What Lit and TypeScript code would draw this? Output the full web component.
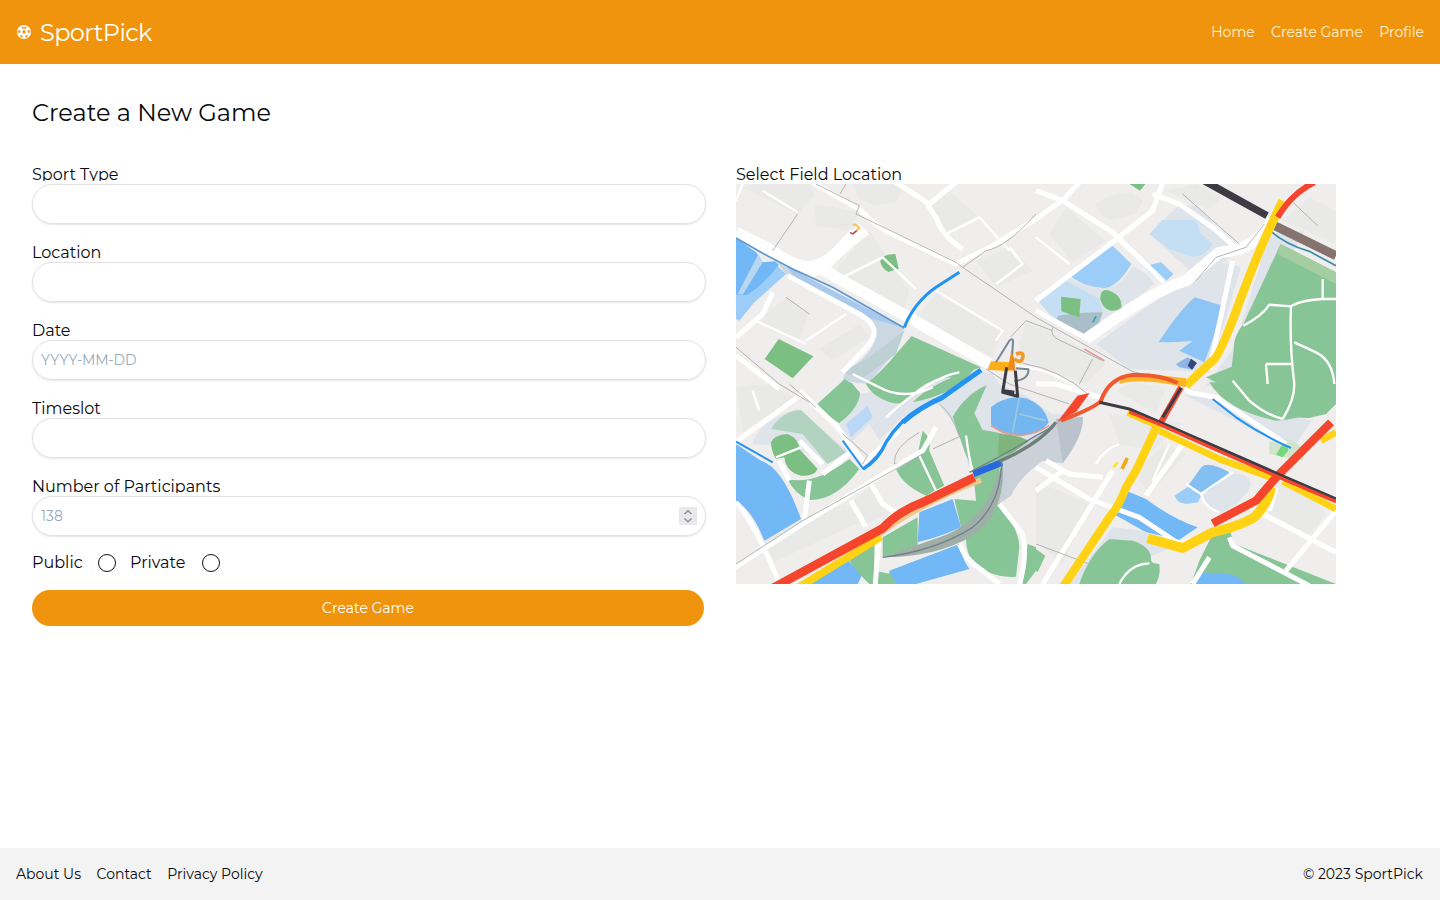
import { LitElement, html, css, svg } from "lit";
import { customElement } from "lit/decorators.js";

@customElement("field-map")
export class FieldMap extends LitElement {
  static styles = css`
    :host { display: block; width: 600px; height: 400px; }
    svg { display: block; width: 100%; height: 100%; }
    .park { fill: #88c596; }
    .lawn { fill: #7bbf82; }
    .water { fill: #72b7f6; }
    .pond { fill: #9bcdf8; }
    .shallow { fill: #c4def4; }
    .haze { fill: #dfe4ea; }
    .mist { fill: #cbd7e3; }
    .tone { fill: #e9e9e8; }
    .plain { fill: #efeeed; }
    .road, .lane, .thin, .line { fill: none; stroke: #fff; stroke-linejoin: round; }
    .road { stroke-width: 34; }
    .lane { stroke-width: 15; }
    .thin { stroke-width: 7; }
    .line { stroke: #a7a7a9; stroke-width: 2.5; }
    .route { fill: none; stroke-linejoin: round; }
    .blue { stroke: #2293f3; }
    .red { stroke: #f5452d; }
    .yellow { stroke: #ffd313; }
    .dark { stroke: #3d3c45; }
  `;

  private areas() {
    return svg`
      <path class="tone" d="M20 10L60 0H220L235 35L185 90ZM350 0H510L480 55L420 65L370 45ZM585 60L640 20L730 100L630 150ZM235 60L370 85L340 140L240 125ZM290 270L400 140L520 320L500 390L330 300ZM535 405L610 320L800 440L770 520ZM60 410L160 335L215 390L190 470ZM250 495L370 420L400 460L290 530ZM720 230L820 190L890 260L780 310ZM1080 60Q1120 25 1190 25L1220 50L1200 90L1130 107Q1085 100 1080 60ZM1290 20L1380 0L1460 40L1420 75ZM940 150L990 70L1110 170L1010 235ZM1640 110L1720 40L1800 80V180ZM0 610L100 600L175 640L20 745ZM60 1040L330 960L380 1010L100 1140ZM350 950L400 910L460 990L390 1020ZM1120 690L1260 700L1340 720L1250 800L1150 780ZM1190 860L1290 780L1350 810L1240 930ZM900 890L1060 960L980 1140L900 1070ZM1600 900L1700 910L1770 990L1720 1050L1600 990ZM840 520L870 415L1000 470L1110 540L1050 600ZM1140 620L1190 595L1290 610L1260 690Z"/>
      <path class="water" d="M0 162L62 206L80 235L118 232L128 242Q100 320 30 335L0 332Z"/>
      <path class="pond" d="M0 332L32 334Q85 300 125 247L150 270L55 355L10 410L0 405Z"/>
      <path d="M66 212L80 235L20 332L5 330Z" fill="#b8d7f1"/>
      <path class="mist" d="M120 232L505 432L480 500L395 600L320 590L330 560Q415 510 420 450Q405 410 330 365L150 270Z"/>
      <path d="M150 245L500 430L390 400L180 285Z" fill="#a9c9ec"/>
      <path d="M400 520L505 440L480 510L380 582L320 565Z" fill="#bdd0d4"/>
      <path class="haze" d="M690 545L770 570L790 600L870 635L950 690L1030 690L990 760L690 850L640 700L590 650L500 700L380 820L310 730L370 630L430 620Z"/>
      <path class="park" d="M527 456L735 550L650 580Q580 580 530 630Q500 665 470 657Q410 640 390 600Q440 560 480 510ZM310 600L325 586L348 598L372 627Q370 670 310 718L235 668ZM530 655Q580 600 715 555Q660 630 530 655Z"/>
      <path class="lawn" d="M128 465L232 517L170 583L86 525ZM1181 0H1228L1212 20ZM981 338L1034 343L1030 400L976 382Z"/>
      <path class="haze" d="M1240 150Q1290 95 1330 65H1380L1420 105L1500 205L1390 285Z"/>
      <path class="shallow" d="M1240 150L1280 108H1380L1395 150L1430 180Q1405 220 1370 218L1300 195Z"/>
      <path class="pond" d="M1232 245L1275 234L1312 270L1290 292Q1275 300 1232 255Z"/>
      <path class="pond" d="M1000 273L1130 185L1186 240Q1150 302 1110 312Q1040 310 1000 273Z"/>
      <path class="haze" d="M905 350L1000 280Q1070 322 1120 310Q1160 300 1190 245Q1235 265 1255 300L1200 345L1055 455L960 415Z"/>
      <path class="shallow" d="M915 340L985 287L1090 345L1100 390L960 415L912 355Z"/>
      <path d="M967 395Q1040 385 1100 385L1085 430L1050 452L958 410Z" fill="#a9bec7"/>
      <path class="lawn" d="M433 234Q434 211 478 210L488 254L457 264Q438 254 433 234ZM975 338L1034 345L1030 400L976 382ZM1093 342Q1095 305 1130 325Q1160 340 1156 374Q1105 395 1092 342Z"/>
      <path class="haze" d="M1080 480Q1270 340 1390 260Q1430 220 1515 250L1420 565L1330 560L1180 555Z"/>
      <path class="haze" d="M1600 150L1705 140L1630 280L1560 500L1480 590L1405 610L1495 490Z"/>
      <path d="M1370 470Q1325 475 1268 475Q1330 380 1376 340L1455 364Q1440 450 1405 535L1330 500Z" fill="#8ec5f7"/>
      <path class="park" d="M1634 180L1800 265V660L1770 690L1720 702Q1640 705 1550 650L1410 580L1487 548L1493 500Q1490 460 1522 420Z"/>
      <path d="M1634 180L1800 265V300L1625 210Z" fill="#a4cda1"/>
      <path class="haze" d="M48 780Q75 705 185 675L335 800L270 840L180 790Z"/>
      <path d="M105 735Q140 680 195 678L330 805L275 840L200 750Z" fill="#b3d3c1"/>
      <path class="lawn" d="M105 775Q115 752 155 750Q190 765 190 795L245 855Q235 878 195 875Q150 865 145 820L120 825Q105 800 105 775Z"/>
      <path class="park" d="M155 885Q235 905 340 825L370 855Q300 950 220 948Q175 930 155 885Z"/>
      <path d="M330 720L395 665L410 700L345 760Z" fill="#b9d8f7"/>
      <path class="plain" d="M390 825L350 770L400 720L430 770ZM430 850Q500 700 610 663L680 760L700 865L480 980L400 900Z"/>
      <path class="water" d="M0 780L75 830Q140 850 195 1005L85 1070Q50 980 0 950Z"/>
      <path class="park" d="M752 604Q690 630 650 698L685 800L712 867L720 950L655 945L675 1030Q775 985 795 830L880 775Q800 745 740 738L715 688Z"/>
      <path class="park" d="M560 740Q585 760 580 800L625 905L595 920L545 810ZM475 840L545 810L595 920L570 935Q490 900 475 840Z"/>
      <path class="pond" d="M765 670Q800 640 850 640Q920 650 938 715Q910 755 850 755Q785 750 765 720Z"/>
      <path d="M765 670Q800 640 850 640Q920 650 938 715Q910 755 850 755Q785 750 765 720Z" fill="#5faaeb" opacity=".65"/>
      <path d="M790 750Q840 750 878 770Q850 810 785 815Z" fill="#80b47e"/>
      <path class="water" d="M550 985L650 945L675 1030Q610 1060 545 1075ZM460 1160L670 1080Q675 1120 700 1155L540 1200H460ZM190 1200L335 1128L380 1170L365 1200Z"/>
      <path class="park" d="M440 1060L545 1000V1085L440 1120ZM340 1130L415 1065V1160L465 1170L480 1200H400L370 1170ZM690 1065Q720 980 790 955Q850 1040 850 1090L840 1178Q780 1185 710 1140Q690 1100 690 1065ZM875 1080L900 1090V1160L870 1200H860Z"/>
      <path d="M795 830L940 730L1040 698Q1045 750 980 838L920 830Q850 880 825 935L780 965Z" fill="#cbd1d8"/>
      <path d="M960 705L1040 698Q1045 750 980 838Z" fill="#bac2cb"/>
      <path d="M440 1120L610 1060Q750 1010 782 880L800 840Q810 985 710 1055Q600 1120 440 1120Z" fill="#9fafa8"/>
      <path class="haze" d="M1340 630L1500 660L1730 710L1740 690L1670 795Z"/>
      <path class="park" d="M1420 595Q1470 680 1620 710Q1780 700 1790 600Z"/>
      <path d="M1600 775Q1650 755 1680 775Q1710 800 1700 830L1600 810Z" fill="#d2e4cc"/>
      <path d="M1620 812L1640 780Q1660 780 1656 800L1640 820Z" fill="#75d67b"/>
      <path class="pond" d="M1315 935L1360 905L1400 930L1385 955Q1340 965 1325 950Z"/>
      <path d="M1358 903L1392 855Q1410 825 1480 865L1440 910L1398 930Z" fill="#84bff1"/>
      <path class="haze" d="M1480 870Q1540 865 1545 900Q1530 950 1450 990Q1410 970 1402 935Z"/>
      <path class="water" d="M1170 920L1230 945Q1310 1005 1385 1030L1330 1067L1230 1045L1133 990Z"/>
      <path class="haze" d="M1130 1030L1220 1040L1330 1080L1240 1120L1030 1200H1000Z"/>
      <path class="park" d="M1030 1200Q1060 1110 1120 1065L1190 1070Q1240 1085 1245 1120Q1240 1140 1270 1140Q1275 1170 1260 1200ZM1430 1050L1480 1035L1495 1080L1800 1200H1365L1390 1130ZM900 1095L928 1115L905 1165L900 1160Z"/>
      <path class="water" d="M1390 1165L1450 1168Q1500 1165 1530 1200H1370Z"/>
    `;
  }

  private streets() {
    return svg`
      <path class="road" d="M0 145L100 195Q150 235 210 250Q260 250 300 280L510 395L760 540M1050 465Q1250 320 1350 290L1450 205Q1540 200 1585 140L1610 110"/>
      <path d="M160 235Q220 250 260 220L350 140L370 120L400 150Q330 200 270 265L230 280Z" fill="#fff"/>
      <path class="lane" d="M1390 -10L1500 40M1360 625L1440 640L1650 780M900 600L960 600L1090 640M1320 590L1360 625"/>
      <path stroke-width="24" class="lane" d="M-10 780L130 680L205 625M0 515L130 615M190 620L300 725L385 835L490 740M220 -10L370 75Q420 130 480 155L660 240L770 185L900 105M150 220Q220 265 290 205L350 140"/>
      <path class="lane" d="M155 275L370 390Q440 430 400 480L320 565M0 460L80 390L110 325M900 20L980 50L1130 145L1285 295M900 350L1110 190L1250 80L1280 -5M900 105L985 45L1030 -5M900 380L1055 465M1250 30L1330 60L1430 130L1520 210M570 55L600 100Q620 160 680 195M480 -5L580 60L660 -5M1490 230L1420 560"/>
      <path class="lane" d="M0 955Q60 1020 130 1200M-10 1155L200 1020L410 890L560 800L600 730M400 890L440 960L480 985M345 950L390 1030M418 1200L430 1040M130 830L160 890M260 870L350 800M190 770L260 840M220 890L205 1010M670 1080Q690 1130 740 1160L790 1200M790 960L860 1050Q875 1120 850 1200M900 850L1060 945L1210 1000L1330 1080L1380 1065M920 1200L1130 860M1340 780L1230 935M1580 990L1800 1105M1650 1160L1800 980M1420 1120L1370 1200M1480 1060L1490 1085L1720 1205M1600 980L1620 910M900 920L980 860M930 830L1000 870L1100 880"/>
      <path class="thin" d="M20 0L0 50M80 20L185 85M60 410L210 480M320 280L440 220L540 315M210 470L330 390M600 320L800 440L780 470M820 190L860 240L780 300M630 150L730 100L820 200M900 160L1000 240M1522 425Q1580 395 1600 362L1665 367Q1690 350 1760 345H1800M1760 345V285M1665 367Q1660 480 1675 600M1675 475L1740 505Q1790 530 1795 600M1590 540H1665M1590 540L1595 600M1490 590L1540 650Q1585 690 1640 705M1675 600Q1675 650 1640 705M545 805L600 920M1350 900L1395 930L1490 865M1395 930Q1405 970 1450 985M690 755Q700 830 710 860M120 820L195 790M1150 1200Q1180 1140 1240 1138M50 620L70 680M450 700Q580 580 670 565M350 570L430 610Q500 650 590 610M1300 780L1250 890M1150 780Q1100 800 1080 840M820 545Q960 550 1055 635"/>
      <path class="line" d="M240 0L370 65L360 90L660 235L680 250L900 400L1060 490L1190 563L1330 595M680 250L750 200Q810 190 900 90M330 0L312 30M0 490L130 600L220 655M160 600L240 670M950 430Q940 455 970 468L1100 530M1380 290L1440 220L1530 190L1585 120M1660 45L1745 125M1340 30L1430 110L1510 180M590 795L670 758Q650 690 610 660M475 840Q470 790 550 745M0 1140L200 1010L560 810M150 340L220 390M825 458L870 410L950 440M860 538Q970 555 1055 630M750 555L820 600L1000 660M1070 525L1030 600M900 1080L1060 1140M185 90L110 200M380 840L395 815L320 750"/>
    `;
  }

  private routes() {
    return svg`
      <path class="route dark" stroke-width="22" d="M1400 -12L1593 95"/>
      <path class="route" stroke="#85736f" stroke-width="27" d="M1618 126L1800 215"/>
      <path class="route" stroke="#378da9" stroke-width="5" d="M1605 142Q1650 182 1720 202L1800 245"/>
      <path class="route" stroke="#5b98cf" stroke-width="5" d="M0 162L80 208L170 255L290 310L505 432"/>
      <path class="route blue" stroke-width="9" d="M505 430Q535 355 600 310L670 265"/>
      <path class="route blue" stroke-width="6" d="M0 773L110 835M320 770L382 855Q425 835 450 778M1430 645L1500 700Q1580 755 1665 792"/>
      <path class="route blue" stroke-width="10" d="M382 855Q430 820 450 775Q490 710 550 675"/>
      <path class="route blue" stroke-width="15" d="M500 715Q550 670 620 640L735 558"/>
      <path class="route" stroke="#9fc9dc" stroke-width="5" d="M850 640L830 745M850 690L930 710"/>
      <path class="route yellow" stroke-width="26" d="M1640 50L1602 130Q1560 220 1510 355Q1450 520 1430 530L1350 605"/>
      <path class="route yellow" stroke-width="25" d="M1270 710L1200 860L1170 910Q1150 965 1120 1000L980 1210"/>
      <path class="route yellow" stroke-width="20" d="M1175 685L1265 725M1270 740L1450 825L1605 880M1640 892L1800 975M1800 745L1755 770"/>
      <path d="M1150 600Q1150 570 1240 570L1350 583L1350 610Q1210 580 1150 600Z" fill="#ffb325"/>
      <path class="route" stroke="#ef5930" stroke-width="12" d="M975 710Q1080 670 1095 650Q1120 580 1190 573Q1270 570 1325 597"/>
      <path class="red" fill="#f5452d" d="M965 713L1025 635L1060 628L1020 683Z"/>
      <path class="route red" stroke-width="18" d="M1735 -5Q1665 30 1625 100M1335 610L1275 715"/>
      <path class="route yellow" stroke-width="29" d="M1235 1063L1340 1092L1430 1045Q1530 1020 1560 995Q1600 950 1605 910"/>
      <path class="route red" stroke-width="25" d="M1430 1018L1560 950L1590 915L1625 875L1730 770L1785 715"/>
      <path class="route dark" stroke-width="9" d="M1090 655L1180 675L1270 714L1620 867L1800 945M1280 700L1335 612"/>
      <path class="route red" stroke-width="10" d="M1180 684L1270 721L1430 793L1620 876L1800 953"/>
      <path class="route yellow" stroke-width="23" d="M180 1215L435 1058"/>
      <path class="route" stroke="#f0c78c" stroke-width="16" d="M430 1050Q560 955 735 888"/>
      <path class="route red" stroke-width="26" d="M100 1218L440 1033Q490 980 560 955L715 880"/>
      <path class="route" stroke="#2768df" stroke-width="20" d="M712 870L798 835"/>
      <path class="route" stroke="#6e7e79" stroke-width="10" d="M790 832Q910 780 960 715"/>
      <path class="route" stroke="#72808a" stroke-width="4" d="M797 830Q795 960 710 1030Q600 1100 440 1120M700 865Q810 810 900 755Q950 730 960 715"/>
      <path class="route" stroke="#e69a91" stroke-width="5" d="M1045 495L1105 530M765 725L800 745L850 755Q900 750 940 725"/>
      <path d="M765 532L825 535L820 562L755 557Z" fill="#ffae16"/>
      <path class="route" stroke="#758895" stroke-width="6" d="M780 535L820 470Q832 460 831 475L826 550M840 553L877 556Q880 585 835 592"/>
      <path class="route" stroke="#f49725" stroke-width="11" d="M840 510Q865 500 860 522Q855 540 835 525"/>
      <path d="M826 500L835 525L838 560L815 558Z" fill="#ed8b1b"/>
      <path class="route dark" stroke-width="9" d="M812 550L800 625L845 637L838 560M804 620L835 625"/>
      <path class="route" stroke="#f9bf52" stroke-width="6" d="M352 125Q355 115 370 132L350 150"/>
      <path class="route" stroke="#b64162" stroke-width="4" d="M342 145L350 150L362 140"/>
      <path class="route" stroke="#efa914" stroke-width="11" d="M1158 855L1174 822"/>
      <path class="route" stroke="#ffe32d" stroke-width="8" d="M1132 850L1145 835"/>
      <path d="M1320 540L1355 520L1380 535L1370 557L1330 550Z" fill="#8db5e6"/>
      <path d="M1365 524L1383 537L1368 557L1355 545Z" fill="#34457f"/>
      <path class="route" stroke="#24a8bf" stroke-width="5" d="M1070 415L1080 397"/>
    `;
  }

  render() {
    return html`<svg viewBox="0 0 1800 1200" role="img" aria-label="Field map">
      <rect class="plain" width="1800" height="1200"></rect>
      ${this.areas()}${this.streets()}${this.routes()}
    </svg>`;
  }
}

@customElement("app-root")
export class AppRoot extends LitElement {
  static styles = css`
    :host {
      display: flex; flex-direction: column; height: 100vh; background: #fff; color: #09090b;
      font: 14px/20px Montserrat, Inter, sans-serif;
    }
    * { box-sizing: border-box; }
    header { height: 64px; padding: 0 16px; background: #ef940c; color: #fff; display: flex; align-items: center; justify-content: space-between; flex: none; }
    .brand { display: flex; align-items: center; gap: 8px; font-size: 24px; line-height: 32px; letter-spacing: -0.6px; }
    .brand span { padding-top: 2px; }
    .brand svg { width: 16px; height: 16px; }
    nav { display: flex; gap: 16.4px; color: #fff5dc; }
    .links { display: flex; gap: 15.6px; }
    main { flex: 1; padding: 32px; }
    h1 { margin: 0 0 37px; font-size: 24px; line-height: 32px; font-weight: 400; padding-top: 1px; height: 32px; white-space: nowrap; }
    .columns { display: grid; grid-template-columns: 1fr 1fr; gap: 32px; }
    .field { margin-bottom: 19px; }
    .label { display: block; height: 16px; margin-bottom: 3px; font-size: 16px; line-height: 20px; overflow: hidden; white-space: nowrap; }
    .box { display: flex; align-items: center; justify-content: space-between; width: calc(100% + 2px); height: 40px; padding: 0 8px; border: 1px solid #e1e1e3; border-radius: 20px; box-shadow: 0 1px 2px #0000001a; color: #9ba9bd; }
    .date { letter-spacing: -0.2px; }
    .spin { width: 18px; height: 18px; background: #e9e9ed; }
    .choices { display: flex; align-items: center; height: 20px; margin: -2px 0 17px; font-size: 16px; }
    .ring { width: 18px; height: 18px; border: 1px solid #111; border-radius: 50%; }
    .public { width: 66px; }
    .private { width: 72px; margin-left: 14px; }
    .submit { display: block; width: 100%; height: 36px; border: 0; border-radius: 18px; background: #ef940c; color: #fff; font: inherit; }
    footer { height: 52px; flex: none; padding: 0 17px 0 16px; display: flex; align-items: center; justify-content: space-between; background: #f3f3f3; }
  `;

  private field(label: string, placeholder = "", numeric = false) {
    return html`<div class="field">
      <span class="label">${label}</span>
      <div class="box"><span class=${numeric ? "count" : "date"}>${placeholder}</span>${numeric
        ? html`<svg class="spin" viewBox="0 0 18 18" fill="none" stroke="#8f8f98" stroke-width="1.5"><path d="M5.5 7L9 3.8L12.5 7M5.5 11.5L9 14.7L12.5 11.5"/></svg>`
        : ""}</div>
    </div>`;
  }

  render() {
    return html`
      <header>
        <div class="brand">
          <svg viewBox="0 0 16 16"><circle cx="8" cy="8" r="7" fill="#fff"/><path fill="#ef940c" d="M8 6.1L9.8 7.4L9.1 9.5H6.9L6.2 7.4ZM5.4 2.3L8 3.5L10.6 2.3L10.2 3.9L8 4.9L5.8 3.9ZM2 7L3.6 5.8L4.4 7.3L3.6 9.1L2.2 8.8ZM14 7L12.4 5.8L11.6 7.3L12.4 9.1L13.8 8.8ZM4.3 12.6L4.4 10.9L6 11.2L6.9 12.8L6 13.7ZM11.7 12.6L11.6 10.9L10 11.2L9.1 12.8L10 13.7Z"/></svg>
          <span>SportPick</span>
        </div>
        <nav><span>Home</span><span>Create Game</span><span>Profile</span></nav>
      </header>
      <main>
        <h1>Create a New Game</h1>
        <div class="columns">
          <section>
            ${this.field("Sport Type")}${this.field("Location")}${this.field("Date", "YYYY-MM-DD")}
            ${this.field("Timeslot")}${this.field("Number of Participants", "138", true)}
            <div class="choices">
              <span class="public">Public</span><span class="ring"></span>
              <span class="private">Private</span><span class="ring"></span>
            </div>
            <button class="submit">Create Game</button>
          </section>
          <section><span class="label">Select Field Location</span><field-map></field-map></section>
        </div>
      </main>
      <footer>
        <div class="links"><span>About Us</span><span>Contact</span><span>Privacy Policy</span></div>
        <span>© 2023 SportPick</span>
      </footer>`;
  }
}
